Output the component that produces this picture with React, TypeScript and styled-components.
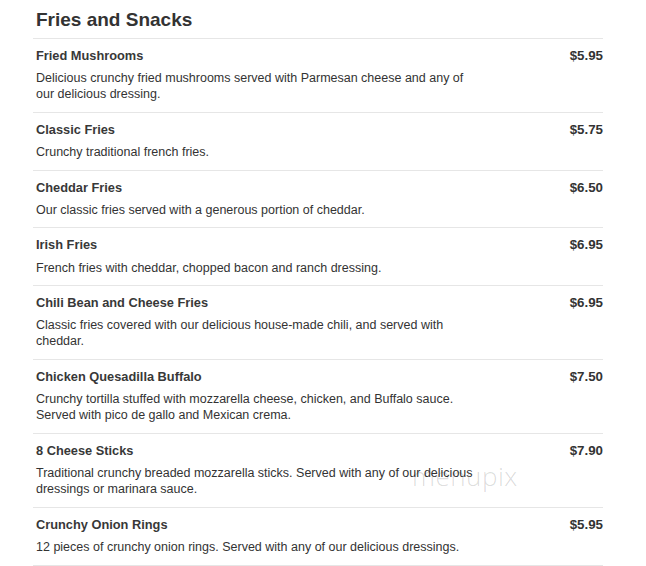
import React from "react";
import styled, { createGlobalStyle } from "styled-components";

type MenuItem = {
  name: string;
  price: string;
  description: string;
};

const items: MenuItem[] = [
  {
    name: "Fried Mushrooms",
    price: "$5.95",
    description:
      "Delicious crunchy fried mushrooms served with Parmesan cheese and any of our delicious dressing.",
  },
  { name: "Classic Fries", price: "$5.75", description: "Crunchy traditional french fries." },
  {
    name: "Cheddar Fries",
    price: "$6.50",
    description: "Our classic fries served with a generous portion of cheddar.",
  },
  {
    name: "Irish Fries",
    price: "$6.95",
    description: "French fries with cheddar, chopped bacon and ranch dressing.",
  },
  {
    name: "Chili Bean and Cheese Fries",
    price: "$6.95",
    description:
      "Classic fries covered with our delicious house-made chili, and served with cheddar.",
  },
  {
    name: "Chicken Quesadilla Buffalo",
    price: "$7.50",
    description:
      "Crunchy tortilla stuffed with mozzarella cheese, chicken, and Buffalo sauce. Served with pico de gallo and Mexican crema.",
  },
  {
    name: "8 Cheese Sticks",
    price: "$7.90",
    description:
      "Traditional crunchy breaded mozzarella sticks. Served with any of our delicious dressings or marinara sauce.",
  },
  {
    name: "Crunchy Onion Rings",
    price: "$5.95",
    description: "12 pieces of crunchy onion rings. Served with any of our delicious dressings.",
  },
];

const GlobalStyle = createGlobalStyle`
  body {
    margin: 0;
    background: #fff;
    font-family: "Liberation Sans", Arial, sans-serif;
    color: #333;
  }
`;

const Page = styled.div`
  position: relative;
  width: 570px;
  margin-left: 33px;
  padding-top: 8px;
`;

const Heading = styled.h2`
  margin: 0 0 6px;
  padding-left: 3px;
  font-size: 19px;
  line-height: 24px;
  font-weight: 700;
  color: #333;
`;

const List = styled.ul`
  list-style: none;
  margin: 0;
  padding: 0;
`;

const Row = styled.li`
  border-top: 1px solid #e6e6e6;
  padding: 8px 0 9.25px 3px;
  &:last-child {
    border-bottom: 1px solid #e6e6e6;
  }
`;

const TitleLine = styled.div`
  display: flex;
  justify-content: space-between;
  align-items: baseline;
  height: 18px;
  line-height: 18px;
`;

const Name = styled.span`
  font-size: 12.8px;
  font-weight: 700;
  color: #383838;
`;

const Price = styled.span`
  font-size: 13.3px;
  font-weight: 700;
  color: #333;
`;

const Description = styled.p`
  margin: 5.2px 0 0;
  max-width: 446px;
  font-size: 12.5px;
  line-height: 16.25px;
  color: #333;
`;

const Watermark = styled.div`
  position: absolute;
  left: 379px;
  top: 458px;
  font-family: "Open Sans", sans-serif;
  font-weight: 300;
  font-size: 26px;
  letter-spacing: 0.5px;
  color: rgba(0, 0, 0, 0.15);
  pointer-events: none;
`;

export default function App() {
  return (
    <>
      <GlobalStyle />
      <Page>
        <Heading>Fries and Snacks</Heading>
        <List>
          {items.map((item) => (
            <Row key={item.name}>
              <TitleLine>
                <Name>{item.name}</Name>
                <Price>{item.price}</Price>
              </TitleLine>
              <Description>{item.description}</Description>
            </Row>
          ))}
        </List>
        <Watermark>menupix</Watermark>
      </Page>
    </>
  );
}
